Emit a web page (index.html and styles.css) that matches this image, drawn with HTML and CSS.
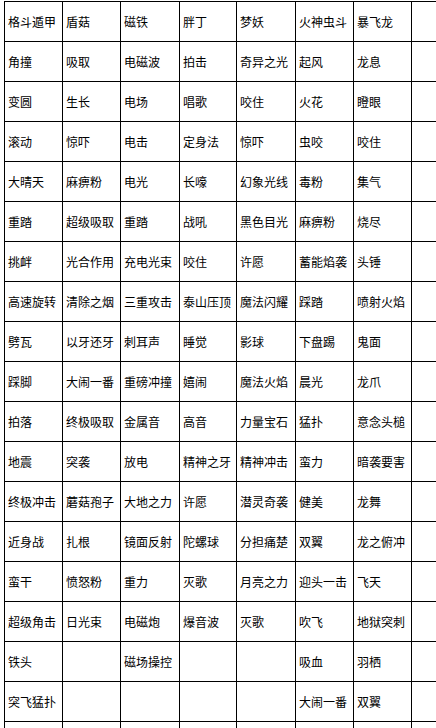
FILE: index.html
```html
<!DOCTYPE html>
<html lang="zh-CN">
<head>
<meta charset="utf-8">
<title>技能表</title>
<link rel="stylesheet" href="styles.css">
</head>
<body>
<div class="sheet">
<div class="cell">格斗遁甲</div><div class="cell">盾菇</div><div class="cell">磁铁</div><div class="cell">胖丁</div><div class="cell">梦妖</div><div class="cell">火神虫斗</div><div class="cell">暴飞龙</div><div class="cell"></div>
<div class="cell">角撞</div><div class="cell">吸取</div><div class="cell">电磁波</div><div class="cell">拍击</div><div class="cell">奇异之光</div><div class="cell">起风</div><div class="cell">龙息</div><div class="cell"></div>
<div class="cell">变圆</div><div class="cell">生长</div><div class="cell">电场</div><div class="cell">唱歌</div><div class="cell">咬住</div><div class="cell">火花</div><div class="cell">瞪眼</div><div class="cell"></div>
<div class="cell">滚动</div><div class="cell">惊吓</div><div class="cell">电击</div><div class="cell">定身法</div><div class="cell">惊吓</div><div class="cell">虫咬</div><div class="cell">咬住</div><div class="cell"></div>
<div class="cell">大晴天</div><div class="cell">麻痹粉</div><div class="cell">电光</div><div class="cell">长嚎</div><div class="cell">幻象光线</div><div class="cell">毒粉</div><div class="cell">集气</div><div class="cell"></div>
<div class="cell">重踏</div><div class="cell">超级吸取</div><div class="cell">重踏</div><div class="cell">战吼</div><div class="cell">黑色目光</div><div class="cell">麻痹粉</div><div class="cell">烧尽</div><div class="cell"></div>
<div class="cell">挑衅</div><div class="cell">光合作用</div><div class="cell">充电光束</div><div class="cell">咬住</div><div class="cell">许愿</div><div class="cell">蓄能焰袭</div><div class="cell">头锤</div><div class="cell"></div>
<div class="cell">高速旋转</div><div class="cell">清除之烟</div><div class="cell">三重攻击</div><div class="cell">泰山压顶</div><div class="cell">魔法闪耀</div><div class="cell">踩踏</div><div class="cell">喷射火焰</div><div class="cell"></div>
<div class="cell">劈瓦</div><div class="cell">以牙还牙</div><div class="cell">刺耳声</div><div class="cell">睡觉</div><div class="cell">影球</div><div class="cell">下盘踢</div><div class="cell">鬼面</div><div class="cell"></div>
<div class="cell">踩脚</div><div class="cell">大闹一番</div><div class="cell">重磅冲撞</div><div class="cell">嬉闹</div><div class="cell">魔法火焰</div><div class="cell">晨光</div><div class="cell">龙爪</div><div class="cell"></div>
<div class="cell">拍落</div><div class="cell">终极吸取</div><div class="cell">金属音</div><div class="cell">高音</div><div class="cell">力量宝石</div><div class="cell">猛扑</div><div class="cell">意念头槌</div><div class="cell"></div>
<div class="cell">地震</div><div class="cell">突袭</div><div class="cell">放电</div><div class="cell">精神之牙</div><div class="cell">精神冲击</div><div class="cell">蛮力</div><div class="cell">暗袭要害</div><div class="cell"></div>
<div class="cell">终极冲击</div><div class="cell">蘑菇孢子</div><div class="cell">大地之力</div><div class="cell">许愿</div><div class="cell">潜灵奇袭</div><div class="cell">健美</div><div class="cell">龙舞</div><div class="cell"></div>
<div class="cell">近身战</div><div class="cell">扎根</div><div class="cell">镜面反射</div><div class="cell">陀螺球</div><div class="cell">分担痛楚</div><div class="cell">双翼</div><div class="cell">龙之俯冲</div><div class="cell"></div>
<div class="cell">蛮干</div><div class="cell">愤怒粉</div><div class="cell">重力</div><div class="cell">灭歌</div><div class="cell">月亮之力</div><div class="cell">迎头一击</div><div class="cell">飞天</div><div class="cell"></div>
<div class="cell">超级角击</div><div class="cell">日光束</div><div class="cell">电磁炮</div><div class="cell">爆音波</div><div class="cell">灭歌</div><div class="cell">吹飞</div><div class="cell">地狱突刺</div><div class="cell"></div>
<div class="cell">铁头</div><div class="cell"></div><div class="cell">磁场操控</div><div class="cell"></div><div class="cell"></div><div class="cell">吸血</div><div class="cell">羽栖</div><div class="cell"></div>
<div class="cell">突飞猛扑</div><div class="cell"></div><div class="cell"></div><div class="cell"></div><div class="cell"></div><div class="cell">大闹一番</div><div class="cell">双翼</div><div class="cell"></div>
<div class="cell"></div><div class="cell"></div><div class="cell"></div><div class="cell"></div><div class="cell"></div><div class="cell"></div><div class="cell"></div><div class="cell"></div>
</div>
</body>
</html>
```

FILE: styles.css
```css
html, body {
  margin: 0;
  padding: 0;
  background: #ffffff;
  overflow: hidden;
}

body {
  font-family: "Noto Sans CJK SC", "Liberation Sans", sans-serif;
  font-size: 12px;
  color: #000000;
}

.sheet {
  display: grid;
  grid-template-columns: 58px 58px 59px 57px 59px 58px 58px 24px;
  grid-auto-rows: 40px;
  margin: 1px 0 0 4px;
  border-top: 1px solid #000;
  border-left: 1px solid #000;
  width: max-content;
}

.cell {
  box-sizing: border-box;
  border-right: 1px solid #000;
  border-bottom: 1px solid #000;
  padding-left: 3px;
  display: flex;
  align-items: center;
  white-space: nowrap;
  overflow: hidden;
  line-height: 1;
}

.cell:nth-child(8n) {
  border-right: none;
}
```
